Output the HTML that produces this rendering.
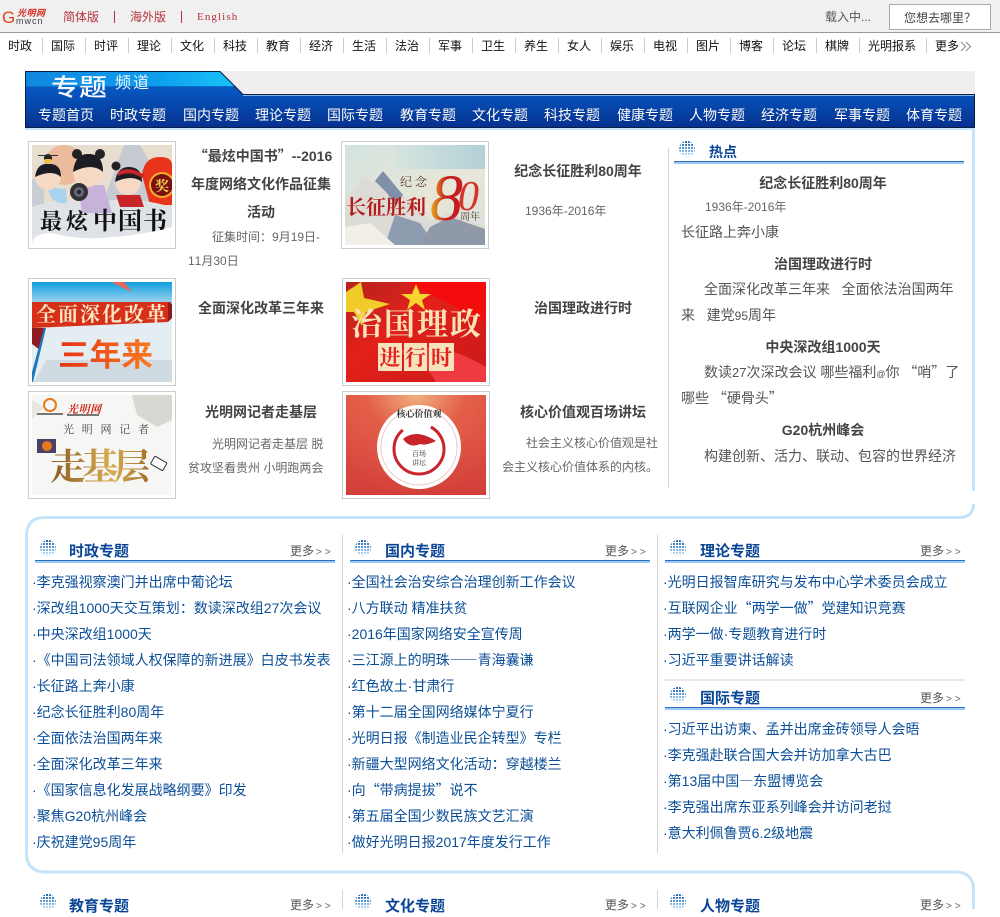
<!DOCTYPE html>
<html lang="zh-CN">
<head>
<meta charset="utf-8">
<title>专题频道</title>
<style>
html,body{margin:0;padding:0;background:#fff}
body{position:relative;width:1000px;height:909px;overflow:hidden;font-family:"Liberation Sans","Noto Sans CJK SC",sans-serif;font-size:14px;text-spacing-trim:space-all;font-kerning:none}
.a{position:absolute}
.t{position:absolute;white-space:nowrap;line-height:20px;height:20px}
.c{transform:translateX(-50%)}
.q{font-family:"Noto Sans CJK SC",sans-serif}
.k{font-family:"Noto Sans CJK TC",sans-serif}
.nav{color:#111;font-size:12px}
.sub{color:#fff;font-size:14px;top:105px;text-shadow:0 0 1px #0b3a8a}
.b{font-weight:700;color:#444;font-size:14px}
.g{color:#666;font-size:12px}
.p{color:#555;font-size:14px}
.h{font-weight:700;color:#0a4596;font-size:15px}
.m{color:#555;font-size:12px}
.m i{font-style:normal;font-size:10px;letter-spacing:3px;color:#666;margin-left:2px}
.l{color:#0b4f98;font-size:14px}
.f{position:absolute;width:140px;height:100px;padding:3px;border:1px solid #ccc;background:#fff}
.f svg{display:block}
.ul{position:absolute;width:300px;height:3px;background:#9ccaf5;border-top:1px solid #2b6fbe;box-sizing:border-box}
.s{position:absolute;width:1px;background:#d4d4d4}
.sep{position:absolute;top:38px;width:1px;height:15px;background:#ccc}
.ic{position:absolute;width:16px;height:16px}
svg text{font-family:"Liberation Serif","Noto Serif CJK SC",serif}
svg text.sn{font-family:"Liberation Sans","Noto Sans CJK SC",sans-serif}
</style>
</head>
<body>
<svg width="0" height="0" style="position:absolute">
<defs>
<linearGradient id="icg" x1="0" y1="0" x2="0" y2="1"><stop offset="0" stop-color="#1c5ea8"/><stop offset=".55" stop-color="#6aa8e0"/><stop offset="1" stop-color="#dff0fc"/></linearGradient>
<symbol id="ic" viewBox="0 0 16 16">
<circle cx="8" cy="8" r="8" fill="url(#icg)"/>
<g stroke="#fff" stroke-width="1"><path d="M2.500 0V16M5.500 0V16M8.500 0V16M11.500 0V16M14.500 0V16M0 2.500H16M0 5.500H16M0 8.500H16M0 11.500H16M0 14.500H16"/></g>
</symbol>
</defs>
</svg>

<!-- top bar -->
<div class="a" style="left:0;top:0;width:1000px;height:32px;background:#f0f0f0;border-bottom:1px solid #999"></div>
<div class="t" style="left:2px;top:8px;color:#e8401f;font-size:17px;font-family:'Liberation Sans',sans-serif">G</div>
<div class="t" style="left:17px;top:3px;color:#d22c20;font-size:9px;font-style:italic;font-weight:700;letter-spacing:.5px">光明网</div>
<div class="t" style="left:16px;top:11px;color:#444;font-size:9px;letter-spacing:1px;font-family:'Liberation Sans',sans-serif">mwcn</div>
<div class="t" style="left:63px;top:7px;font-size:12px;color:#b5323c">简体版</div>
<div class="a" style="left:114px;top:11px;width:1px;height:12px;background:#b5323c"></div>
<div class="t" style="left:130px;top:7px;font-size:12px;color:#b5323c">海外版</div>
<div class="a" style="left:181px;top:11px;width:1px;height:12px;background:#b5323c"></div>
<div class="t" style="left:197px;top:7px;font-size:11px;color:#b5323c;font-family:'Liberation Serif',serif;letter-spacing:1.100px">English</div>
<div class="t" style="left:825px;top:7px;font-size:12px;color:#555">载入中...</div>
<div class="a" style="left:889px;top:4px;width:100px;height:24px;background:#fff;border:1px solid #aaa"></div>
<div class="t" style="left:904px;top:8px;font-size:12px;color:#444">您想去哪里？</div>

<!-- nav -->
<div class="t nav" style="left:8px;top:36px">时政</div><div class="sep" style="left:42px"></div>
<div class="t nav" style="left:51px;top:36px">国际</div><div class="sep" style="left:85px"></div>
<div class="t nav" style="left:94px;top:36px">时评</div><div class="sep" style="left:128px"></div>
<div class="t nav" style="left:137px;top:36px">理论</div><div class="sep" style="left:171px"></div>
<div class="t nav" style="left:180px;top:36px">文化</div><div class="sep" style="left:214px"></div>
<div class="t nav" style="left:223px;top:36px">科技</div><div class="sep" style="left:257px"></div>
<div class="t nav" style="left:266px;top:36px">教育</div><div class="sep" style="left:300px"></div>
<div class="t nav" style="left:309px;top:36px">经济</div><div class="sep" style="left:343px"></div>
<div class="t nav" style="left:352px;top:36px">生活</div><div class="sep" style="left:386px"></div>
<div class="t nav" style="left:395px;top:36px">法治</div><div class="sep" style="left:429px"></div>
<div class="t nav" style="left:438px;top:36px">军事</div><div class="sep" style="left:472px"></div>
<div class="t nav" style="left:481px;top:36px">卫生</div><div class="sep" style="left:515px"></div>
<div class="t nav" style="left:524px;top:36px">养生</div><div class="sep" style="left:558px"></div>
<div class="t nav" style="left:567px;top:36px">女人</div><div class="sep" style="left:601px"></div>
<div class="t nav" style="left:610px;top:36px">娱乐</div><div class="sep" style="left:644px"></div>
<div class="t nav" style="left:653px;top:36px">电视</div><div class="sep" style="left:687px"></div>
<div class="t nav" style="left:696px;top:36px">图片</div><div class="sep" style="left:730px"></div>
<div class="t nav" style="left:739px;top:36px">博客</div><div class="sep" style="left:773px"></div>
<div class="t nav" style="left:782px;top:36px">论坛</div><div class="sep" style="left:816px"></div>
<div class="t nav" style="left:825px;top:36px">棋牌</div><div class="sep" style="left:859px"></div>
<div class="t nav" style="left:868px;top:36px">光明报系</div><div class="sep" style="left:926px"></div>
<div class="t nav" style="left:935px;top:36px">更多</div>
<svg class="a" style="left:960px;top:41px" width="13" height="11"><path d="M1 1L5.500 5.500L1 10M6 1L10.500 5.500L6 10" fill="none" stroke="#8a8a8a"/></svg>

<!-- banner -->
<svg class="a" style="left:25px;top:71px" width="950" height="57" viewBox="0 0 950 57">
<defs>
<linearGradient id="tab" x1="0" y1="0" x2="1" y2="0"><stop offset="0" stop-color="#1088e0"/><stop offset=".6" stop-color="#0f9cec"/><stop offset="1" stop-color="#17c3f8"/></linearGradient>
<linearGradient id="bar" x1="0" y1="0" x2="0" y2="1"><stop offset="0" stop-color="#0a66d2"/><stop offset=".45" stop-color="#0650b8"/><stop offset="1" stop-color="#06308e"/></linearGradient>
</defs>
<rect width="950" height="23" fill="#f0eeef"/>
<path d="M0 0H195L218 23H950V57H0Z" fill="url(#bar)"/>
<path d="M1 1H195L210 15H1Z" fill="url(#tab)"/>
<rect x="1" y="15" width="210" height="1" fill="#0a6cc4"/>
<path d="M.5 57V.5H195L218 23.500H949.500V56.500H0" fill="none" stroke="#0a1e46"/>
<rect x="218" y="24" width="731" height="1" fill="#7fb4ea"/>
</svg>
<div class="t" style="left:51px;top:74px;font-size:28px;line-height:28px;height:28px;color:#f4faff;transform:scaleY(.85);transform-origin:0 50%;font-weight:500">专题</div>
<div class="t" style="left:115px;top:75px;font-size:16px;line-height:18px;height:18px;color:#e8f4ff;letter-spacing:2px">频道</div>
<div class="t sub" style="left:38px">专题首页</div>
<div class="t sub" style="left:110px">时政专题</div>
<div class="t sub" style="left:183px">国内专题</div>
<div class="t sub" style="left:255px">理论专题</div>
<div class="t sub" style="left:327px">国际专题</div>
<div class="t sub" style="left:400px">教育专题</div>
<div class="t sub" style="left:472px">文化专题</div>
<div class="t sub" style="left:544px">科技专题</div>
<div class="t sub" style="left:617px">健康专题</div>
<div class="t sub" style="left:689px">人物专题</div>
<div class="t sub" style="left:761px">经济专题</div>
<div class="t sub" style="left:834px">军事专题</div>
<div class="t sub" style="left:906px">体育专题</div>

<!-- panel lines -->
<div class="a" style="left:25px;top:128px;width:950px;height:2px;background:#c5e4f9"></div>
<svg class="a" style="left:0;top:0" width="1000" height="909">
<g fill="none" stroke="#c5e4f9" stroke-width="3">
<path d="M973.500 129V491"/>
<path d="M973.500 504Q973.500 517.500 958 517.500H45Q26.500 517.500 26.500 536V853Q26.500 872 46 872H955Q973.500 872 973.500 890V909"/>
</g>
</svg>

<!-- image 1 -->
<div class="f" style="left:28px;top:141px"><svg width="140" height="100" viewBox="0 0 140 100">
<rect width="140" height="100" fill="#e8ded0"/>
<path d="M70 60L92 0H108L125 30V70H70Z" fill="#c6cbd2"/>
<path d="M0 35L12 28V70H0Z" fill="#c8cdd3"/>
<circle cx="32" cy="20" r="20" fill="#ecbb9c"/>
<path d="M110 30Q112 12 128 12Q140 12 140 20V60H118Z" fill="#e8341a"/>
<circle cx="130" cy="40" r="13" fill="#f4b02a"/><circle cx="130" cy="40" r="11" fill="#7a1014"/>
<text x="130" y="46" font-size="14" fill="#f6d34a" text-anchor="middle" font-weight="700">奖</text>
<path d="M0 62Q30 50 60 60Q90 48 140 62V100H0Z" fill="#dfe3e7"/>
<path d="M0 100Q0 88 20 88Q50 96 80 92Q110 90 140 82V100Z" fill="#fff"/>
<path d="M16 42Q18 60 35 58L34 44Z" fill="#a9d4ee"/>
<circle cx="16" cy="32" r="13" fill="#f5d9c4"/><path d="M3 32Q5 18 16 19Q29 18 29 32Q20 24 3 32Z" fill="#1c1c22"/>
<circle cx="16" cy="13" r="4" fill="#222"/><rect x="6" y="10" width="20" height="1" fill="#333"/><rect x="13" y="14" width="6" height="4" fill="#f1c230"/>
<path d="M46 40H72L80 68H50Z" fill="#c7b3da"/>
<circle cx="56" cy="27" r="15" fill="#f5d9c4"/><path d="M41 27Q43 8 57 9Q71 9 71 27Q60 17 41 27Z" fill="#1c1c22"/>
<circle cx="45" cy="9" r="5" fill="#222"/><circle cx="68" cy="9" r="5" fill="#222"/>
<circle cx="47" cy="47" r="9" fill="#333"/><circle cx="47" cy="47" r="5" fill="#667"/><circle cx="47" cy="47" r="2" fill="#222"/>
<circle cx="96" cy="37" r="13" fill="#f5d9c4"/><path d="M83 37Q85 22 97 22Q110 22 110 37Q100 29 83 37Z" fill="#1c1c22"/>
<circle cx="84" cy="21" r="4.500" fill="#222"/><path d="M86 27Q98 20 112 30L110 33Q98 25 86 31Z" fill="#c8242a"/>
<path d="M84 50H108L112 62H88Z" fill="#c8242a"/>
<text x="8" y="84" font-size="22" font-weight="700" fill="#111" textLength="48">最炫</text>
<text x="61" y="84" font-size="24" font-weight="700" fill="#111" textLength="74">中国书</text>
</svg></div>

<!-- image 2 -->
<div class="f" style="left:341px;top:141px"><svg width="140" height="100" viewBox="0 0 140 100">
<defs><linearGradient id="sky" x1="0" y1="0" x2="1" y2="1"><stop offset="0" stop-color="#d3e3df"/><stop offset=".6" stop-color="#e8e6d8"/><stop offset="1" stop-color="#d8e0dc"/></linearGradient>
<linearGradient id="sk2" x1="0" y1="0" x2="1" y2="0"><stop offset="0" stop-color="#d3e3df"/><stop offset="1" stop-color="#9cc8d6"/></linearGradient>
<linearGradient id="gd" x1="0" y1="0" x2="1" y2="0"><stop offset="0" stop-color="#e8b020"/><stop offset=".5" stop-color="#c41e1e"/></linearGradient></defs>
<rect width="140" height="100" fill="url(#sky)"/>
<rect x="50" width="90" height="24" fill="url(#sk2)" opacity=".7"/>
<path d="M0 55L20 30L28 38L38 26L60 52L85 75L105 68L140 82V100H0Z" fill="#dddbd6"/>
<path d="M30 36L38 26L58 50L50 60L42 48Z" fill="#7f90a8"/>
<path d="M50 70L75 78L90 100H40Z" fill="#8e9cb0"/>
<path d="M85 82L105 72L140 84V100H75Z" fill="#8f99a8"/>
<path d="M0 100V82L25 78L50 100Z" fill="#f2efe8"/>
<text x="55" y="41" font-size="12" fill="#5a3a2a" letter-spacing="3">纪念</text>
<text x="1" y="69" font-size="20" font-weight="700" fill="#b71c1c" textLength="80">长征胜利</text>
<text x="85" y="75" font-size="66" font-style="italic" fill="url(#gd)">8</text>
<text x="113" y="65" font-size="42" font-style="italic" fill="#d4342a">0</text>
<text x="115" y="75" font-size="10" fill="#4a3a30">周年</text>
</svg></div>

<!-- image 3 -->
<div class="f" style="left:28px;top:278px"><svg width="140" height="100" viewBox="0 0 140 100">
<defs><linearGradient id="s3" x1="0" y1="0" x2="0" y2="1"><stop offset="0" stop-color="#0f9fe0"/><stop offset="1" stop-color="#a8d8ee"/></linearGradient>
<linearGradient id="o3" x1="0" y1="0" x2="1" y2="0"><stop offset="0" stop-color="#e8321a"/><stop offset="1" stop-color="#f87a1e"/></linearGradient></defs>
<rect width="140" height="22" fill="url(#s3)"/>
<rect y="22" width="140" height="78" fill="#e3edf2"/>
<path d="M79 0H92L100 10Z" fill="#e8665a"/>
<path d="M0 20H139L136 40L0 46Z" fill="#d6301a"/>
<path d="M0 46H12L8 68L0 62Z" fill="#8e1a22"/>
<path d="M136 20L140 22V36L136 40Z" fill="#8e1a22"/>
<path d="M0 90L12 46H14L1 100H0Z" fill="#1f78b8"/>
<path d="M14 78H140V100H2Z" fill="#cfdbe0"/>
<text x="4" y="39" font-size="20" fill="#fbe7c4" font-weight="700" textLength="130">全面深化改革</text>
<text class="sn" x="26" y="84" font-size="31" font-weight="700" fill="url(#o3)" textLength="95" lengthAdjust="spacingAndGlyphs">三年来</text>
</svg></div>

<!-- image 4 -->
<div class="f" style="left:342px;top:278px"><svg width="140" height="100" viewBox="0 0 140 100">
<defs><linearGradient id="r4" x1="0" y1="0" x2="1" y2="1"><stop offset="0" stop-color="#b3241e"/><stop offset=".4" stop-color="#e3201a"/><stop offset="1" stop-color="#c81a1a"/></linearGradient></defs>
<rect width="140" height="100" fill="url(#r4)"/>
<path d="M60 0H140V40Z" fill="#f40c0c"/>
<path d="M50 70Q90 55 140 85V100H90Q80 80 50 70Z" fill="#ee3a40"/>
<path d="M0 10L15 0L18 16L44 22L20 30L16 44L8 30H0Z" fill="#f1cb2a"/>
<path d="M70 2L74 12L85 12L76 18L79 28L70 21L61 28L64 18L55 12L66 12Z" fill="#f7d52e"/>
<text x="5" y="53" font-size="31" fill="#f8e2b6" font-weight="700" textLength="130">治国理政</text>
<rect x="32" y="61" width="24" height="28" fill="#f6e2bd"/><rect x="58" y="61" width="23" height="28" fill="#f6e2bd"/><rect x="83" y="61" width="25" height="28" fill="#f6e2bd"/>
<text x="44" y="83" font-size="21" fill="#e4201c" text-anchor="middle" font-weight="700">进</text>
<text x="69.500" y="83" font-size="21" fill="#e4201c" text-anchor="middle" font-weight="700">行</text>
<text x="95.500" y="83" font-size="21" fill="#e4201c" text-anchor="middle" font-weight="700">时</text>
</svg></div>

<!-- image 5 -->
<div class="f" style="left:28px;top:391px"><svg width="140" height="100" viewBox="0 0 140 100">
<defs><linearGradient id="g5" x1="0" y1="0" x2="1" y2="0"><stop offset="0" stop-color="#8a5a24"/><stop offset=".6" stop-color="#d8ac50"/><stop offset="1" stop-color="#a06a28"/></linearGradient></defs>
<rect width="140" height="100" fill="#f6f6f4"/>
<path d="M100 0H140V25L125 32L105 20Z" fill="#d6d9d1"/>
<path d="M0 5L12 12L0 25Z" fill="#e6e6e2"/>
<circle cx="18" cy="10" r="6" fill="none" stroke="#e87a1e" stroke-width="2"/>
<rect x="5" y="18" width="26" height="2" fill="#777"/>
<text x="35" y="18" font-size="11" fill="#d22c20" font-style="italic" font-weight="700" textLength="34">光明网</text>
<rect x="35" y="19" width="32" height="2" fill="#777"/>
<text x="31" y="38" font-size="11" fill="#444" textLength="86">光明网记者</text>
<rect x="5" y="44" width="19" height="14" fill="#4a4266"/><circle cx="15" cy="51" r="5" fill="#e87a1e"/>
<text x="18" y="84" font-size="36" fill="url(#g5)" font-weight="700" textLength="100">走基层</text>
<rect x="120" y="64" width="14" height="9" rx="1" transform="rotate(30 127 68)" fill="#fff" stroke="#333"/>
</svg></div>

<!-- image 6 -->
<div class="f" style="left:342px;top:391px"><svg width="140" height="100" viewBox="0 0 140 100">
<defs><radialGradient id="r6" cx=".5" cy="0" r="1"><stop offset="0" stop-color="#f0b080"/><stop offset=".35" stop-color="#e4604a"/><stop offset="1" stop-color="#d4403a"/></radialGradient></defs>
<rect width="140" height="100" fill="url(#r6)"/>
<circle cx="73" cy="52" r="42" fill="#fff"/>
<circle cx="73" cy="52" r="38" fill="none" stroke="#f2c4c4"/>
<circle cx="73" cy="54" r="25" fill="none" stroke="#c8242a" stroke-width="3" stroke-dasharray="100 30"/>
<path d="M57 44Q70 33 90 46Q80 51 74 49Q64 54 57 44Z" fill="#c8242a"/>
<text x="73" y="22" font-size="9" fill="#333" text-anchor="middle" font-weight="700">核心价值观</text>
<text x="73" y="61" font-size="7" fill="#333" text-anchor="middle">百场</text>
<text x="73" y="70" font-size="7" fill="#333" text-anchor="middle">讲坛</text>
</svg></div>

<!-- left text -->
<div class="t b c" style="left:263px;top:146px"><span class="q">“</span>最炫中国书<span class="q">”</span>--2016</div>
<div class="t b c" style="left:261px;top:174px">年度网络文化作品征集</div>
<div class="t b c" style="left:261px;top:202px">活动</div>
<div class="t g" style="left:212px;top:227px">征集时间<span class="k">：</span>9月19日-</div>
<div class="t g" style="left:188px;top:251px">11月30日</div>
<div class="t b c" style="left:261px;top:298px">全面深化改革三年来</div>
<div class="t b c" style="left:261px;top:402px">光明网记者走基层</div>
<div class="t g" style="left:212px;top:434px">光明网记者走基层 脱</div>
<div class="t g" style="left:188px;top:458px">贫攻坚看贵州 小明跑两会</div>

<div class="t b c" style="left:578px;top:161px">纪念长征胜利80周年</div>
<div class="t g" style="left:525px;top:201px">1936年-2016年</div>
<div class="t b c" style="left:583px;top:298px">治国理政进行时</div>
<div class="t b c" style="left:583px;top:402px">核心价值观百场讲坛</div>
<div class="t g" style="left:526px;top:433px">社会主义核心价值观是社</div>
<div class="t g" style="left:502px;top:457px">会主义核心价值体系的内核。</div>

<div class="s" style="left:668px;top:148px;height:340px"></div>

<!-- hot -->
<svg class="ic" style="left:679px;top:141px"><use href="#ic"/></svg>
<div class="t h" style="left:709px;top:142px;font-size:14px">热点</div>
<div class="ul" style="left:674px;top:161px;width:290px"></div>
<div class="t b c" style="left:823px;top:173px">纪念长征胜利80周年</div>
<div class="t g" style="left:705px;top:197px">1936年-2016年</div>
<div class="t p" style="left:681px;top:222px">长征路上奔小康</div>
<div class="t b c" style="left:823px;top:254px">治国理政进行时</div>
<div class="t p" style="left:704px;top:279px">全面深化改革三年来&nbsp;&nbsp;&nbsp;全面依法治国两年</div>
<div class="t p" style="left:681px;top:305px">来&nbsp;&nbsp;&nbsp;建党<span style="font-size:12px">95</span>周年</div>
<div class="t b c" style="left:823px;top:337px">中央深改组1000天</div>
<div class="t p" style="left:704px;top:362px">数读<span style="font-size:13px">27</span>次深改会议 哪些福利<span style="font-size:9px">@</span>你 <span class="q">“</span>哨<span class="q">”</span>了</div>
<div class="t p" style="left:681px;top:388px">哪些 <span class="q">“</span>硬骨头<span class="q">”</span></div>
<div class="t b c" style="left:823px;top:420px">G20杭州峰会</div>
<div class="t p" style="left:704px;top:446px">构建创新、活力、联动、包容的世界经济</div>

<!-- section 2 -->
<div class="s" style="left:342px;top:535px;height:318px"></div>
<div class="s" style="left:657px;top:535px;height:318px"></div>

<svg class="ic" style="left:40px;top:540px"><use href="#ic"/></svg>
<div class="t h" style="left:69px;top:542px">时政专题</div>
<div class="t m" style="left:290px;top:541px">更多<i>&gt;&gt;</i></div>
<div class="ul" style="left:35px;top:560px"></div>

<svg class="ic" style="left:355px;top:540px"><use href="#ic"/></svg>
<div class="t h" style="left:385px;top:542px">国内专题</div>
<div class="t m" style="left:605px;top:541px">更多<i>&gt;&gt;</i></div>
<div class="ul" style="left:350px;top:560px"></div>

<svg class="ic" style="left:670px;top:540px"><use href="#ic"/></svg>
<div class="t h" style="left:700px;top:542px">理论专题</div>
<div class="t m" style="left:920px;top:541px">更多<i>&gt;&gt;</i></div>
<div class="ul" style="left:665px;top:560px"></div>

<div class="t l" style="left:32px;top:572px">·李克强视察澳门并出席中葡论坛</div>
<div class="t l" style="left:32px;top:598px">·深改组1000天交互策划<span class="k">：</span>数读深改组27次会议</div>
<div class="t l" style="left:32px;top:624px">·中央深改组1000天</div>
<div class="t l" style="left:32px;top:650px">·《中国司法领域人权保障的新进展》白皮书发表</div>
<div class="t l" style="left:32px;top:676px">·长征路上奔小康</div>
<div class="t l" style="left:32px;top:702px">·纪念长征胜利80周年</div>
<div class="t l" style="left:32px;top:728px">·全面依法治国两年来</div>
<div class="t l" style="left:32px;top:754px">·全面深化改革三年来</div>
<div class="t l" style="left:32px;top:780px">·《国家信息化发展战略纲要》印发</div>
<div class="t l" style="left:32px;top:806px">·聚焦G20杭州峰会</div>
<div class="t l" style="left:32px;top:832px">·庆祝建党95周年</div>

<div class="t l" style="left:347px;top:572px">·全国社会治安综合治理创新工作会议</div>
<div class="t l" style="left:347px;top:598px">·八方联动 精准扶贫</div>
<div class="t l" style="left:347px;top:624px">·2016年国家网络安全宣传周</div>
<div class="t l" style="left:347px;top:650px">·三江源上的明珠<span class="q">——</span>青海囊谦</div>
<div class="t l" style="left:347px;top:676px">·红色故土·甘肃行</div>
<div class="t l" style="left:347px;top:702px">·第十二届全国网络媒体宁夏行</div>
<div class="t l" style="left:347px;top:728px">·光明日报《制造业民企转型》专栏</div>
<div class="t l" style="left:347px;top:754px">·新疆大型网络文化活动<span class="k">：</span>穿越楼兰</div>
<div class="t l" style="left:347px;top:780px">·向<span class="q">“</span>带病提拔<span class="q">”</span>说不</div>
<div class="t l" style="left:347px;top:806px">·第五届全国少数民族文艺汇演</div>
<div class="t l" style="left:347px;top:832px">·做好光明日报2017年度发行工作</div>

<div class="t l" style="left:663px;top:572px">·光明日报智库研究与发布中心学术委员会成立</div>
<div class="t l" style="left:663px;top:598px">·互联网企业<span class="q">“</span>两学一做<span class="q">”</span>党建知识竞赛</div>
<div class="t l" style="left:663px;top:624px">·两学一做·专题教育进行时</div>
<div class="t l" style="left:663px;top:650px">·习近平重要讲话解读</div>

<div class="a" style="left:664px;top:679px;width:301px;height:2px;background:#e8e8e8"></div>
<svg class="ic" style="left:670px;top:687px"><use href="#ic"/></svg>
<div class="t h" style="left:700px;top:689px">国际专题</div>
<div class="t m" style="left:920px;top:688px">更多<i>&gt;&gt;</i></div>
<div class="ul" style="left:665px;top:707px"></div>

<div class="t l" style="left:663px;top:719px">·习近平出访柬、孟并出席金砖领导人会晤</div>
<div class="t l" style="left:663px;top:745px">·李克强赴联合国大会并访加拿大古巴</div>
<div class="t l" style="left:663px;top:771px">·第13届中国<span class="q">—</span>东盟博览会</div>
<div class="t l" style="left:663px;top:797px">·李克强出席东亚系列峰会并访问老挝</div>
<div class="t l" style="left:663px;top:823px">·意大利佩鲁贾6.2级地震</div>

<!-- section 3 -->
<div class="s" style="left:342px;top:890px;height:19px"></div>
<div class="s" style="left:657px;top:890px;height:19px"></div>
<svg class="ic" style="left:40px;top:894px"><use href="#ic"/></svg>
<div class="t h" style="left:69px;top:897px">教育专题</div>
<div class="t m" style="left:290px;top:895px">更多<i>&gt;&gt;</i></div>
<svg class="ic" style="left:355px;top:894px"><use href="#ic"/></svg>
<div class="t h" style="left:385px;top:897px">文化专题</div>
<div class="t m" style="left:605px;top:895px">更多<i>&gt;&gt;</i></div>
<svg class="ic" style="left:670px;top:894px"><use href="#ic"/></svg>
<div class="t h" style="left:700px;top:897px">人物专题</div>
<div class="t m" style="left:920px;top:895px">更多<i>&gt;&gt;</i></div>
</body>
</html>
